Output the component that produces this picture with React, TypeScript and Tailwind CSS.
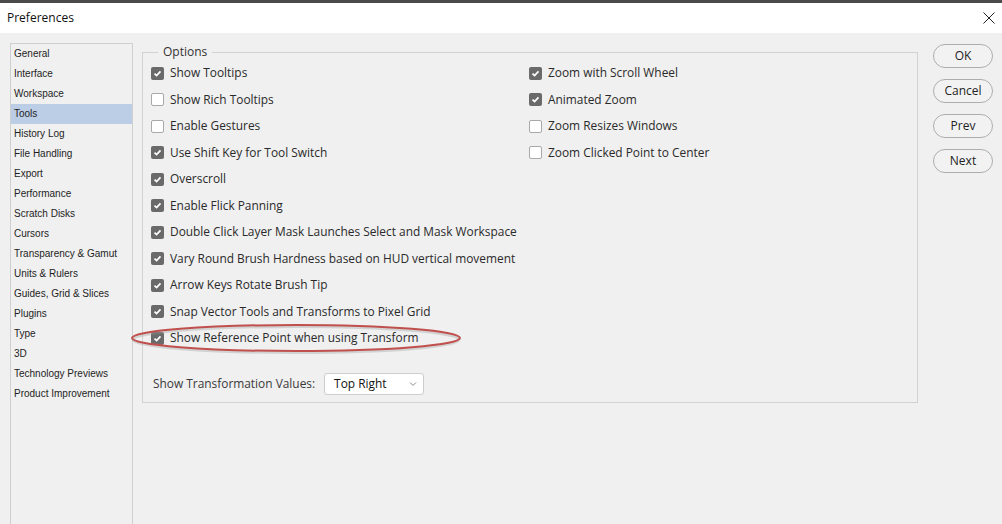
import React from "react";

type Opt = { label: string; checked: boolean };

const left_options: Opt[] = [
  { label: "Show Tooltips", checked: true },
  { label: "Show Rich Tooltips", checked: false },
  { label: "Enable Gestures", checked: false },
  { label: "Use Shift Key for Tool Switch", checked: true },
  { label: "Overscroll", checked: true },
  { label: "Enable Flick Panning", checked: true },
  { label: "Double Click Layer Mask Launches Select and Mask Workspace", checked: true },
  { label: "Vary Round Brush Hardness based on HUD vertical movement", checked: true },
  { label: "Arrow Keys Rotate Brush Tip", checked: true },
  { label: "Snap Vector Tools and Transforms to Pixel Grid", checked: true },
  { label: "Show Reference Point when using Transform", checked: true },
];

const right_options: Opt[] = [
  { label: "Zoom with Scroll Wheel", checked: true },
  { label: "Animated Zoom", checked: true },
  { label: "Zoom Resizes Windows", checked: false },
  { label: "Zoom Clicked Point to Center", checked: false },
];

const sections = [
  "General",
  "Interface",
  "Workspace",
  "Tools",
  "History Log",
  "File Handling",
  "Export",
  "Performance",
  "Scratch Disks",
  "Cursors",
  "Transparency & Gamut",
  "Units & Rulers",
  "Guides, Grid & Slices",
  "Plugins",
  "Type",
  "3D",
  "Technology Previews",
  "Product Improvement",
];

const Checkbox = ({ checked }: { checked: boolean }) =>
  checked ? (
    <span className="flex w-[13px] h-[13px] items-center justify-center rounded-[2px] bg-[#6a6a6a]">
      <svg width="9" height="9" viewBox="0 0 9 9">
        <path d="M1.5 4.6 L3.6 6.6 L7.5 2.4" fill="none" stroke="#fff" strokeWidth="1.7" />
      </svg>
    </span>
  ) : (
    <span className="block w-[13px] h-[13px] rounded-[2px] border border-[#a8a8a8] bg-white" />
  );

const Row = ({ opt }: { opt: Opt }) => (
  <div className="flex h-[26.5px] items-center">
    <Checkbox checked={opt.checked} />
    <span className="ml-[6px] whitespace-nowrap">{opt.label}</span>
  </div>
);

const DialogButton = ({ label }: { label: string }) => (
  <button className="w-[60px] h-[24px] rounded-full border border-[#adadad] bg-[#f2f2f2] text-[12px] text-[#222]">
    {label}
  </button>
);

export default function App() {
  return (
    <div
      className="relative w-[1002px] h-[524px] overflow-hidden bg-[#f0f0f0] flex flex-col text-[#262626]"
      style={{ fontFamily: '"Open Sans", "Liberation Sans", sans-serif' }}
    >
      <div className="h-[3px] bg-[#4b4b4b]" />
      <div className="h-[30px] bg-white flex items-center justify-between pl-[7px] pr-[7px]">
        <span className="text-[12px] text-[#111]">Preferences</span>
        <svg width="12" height="12" viewBox="0 0 12 12">
          <path d="M0.5 0.5 L11.5 11.5 M11.5 0.5 L0.5 11.5" stroke="#222" strokeWidth="1" />
        </svg>
      </div>

      <div className="flex flex-1 pt-[10px]">
        <div
          className="ml-[10px] w-[123px] border-l border-t border-r border-[#cfcfcf] text-[10px] text-[#1e1e1e]"
          style={{ fontFamily: '"Liberation Sans", sans-serif' }}
        >
          {sections.map((s) => (
            <div
              key={s}
              className={
                "h-[20px] flex items-center pl-[3px] pb-[2px] whitespace-nowrap " +
                (s === "Tools" ? "bg-[#bccde6]" : "")
              }
            >
              {s}
            </div>
          ))}
        </div>

        <fieldset className="ml-[9px] w-[776px] h-[360px] border border-[#d2d2d2] pl-[8px] pr-0 pb-0 text-[11.9px] text-[#2a2a2a]">
          <legend className="ml-[7px] px-[5px] text-[12px] text-[#333]">Options</legend>
          <div className="flex -mt-[1px]">
            <div className="w-[378px]">
              {left_options.map((o) => (
                <Row key={o.label} opt={o} />
              ))}
            </div>
            <div>
              {right_options.map((o) => (
                <Row key={o.label} opt={o} />
              ))}
            </div>
          </div>
          <div className="mt-[21px] flex items-center pl-[2px]">
            <span className="whitespace-nowrap text-[#3a3a3a]">Show Transformation Values:</span>
            <div className="ml-[9px] w-[100px] h-[22px] rounded-[3px] border border-[#cdcdcd] bg-white flex items-center justify-between pl-[9px] pr-[6px] text-[#111]">
              <span>Top Right</span>
              <svg width="8" height="6" viewBox="0 0 8 6">
                <path d="M1 1.5 L4 4.5 L7 1.5" fill="none" stroke="#888" strokeWidth="1" />
              </svg>
            </div>
          </div>
        </fieldset>

        <div className="ml-[15px] mt-[1px] flex flex-col gap-[11px]">
          <DialogButton label="OK" />
          <DialogButton label="Cancel" />
          <DialogButton label="Prev" />
          <DialogButton label="Next" />
        </div>
      </div>

      <svg
        className="absolute left-[129px] top-[321px]"
        width="338"
        height="36"
        viewBox="0 0 338 36"
      >
        <ellipse cx="167" cy="18.5" rx="163" ry="13" fill="none" stroke="#9a9a9a" strokeOpacity="0.35" strokeWidth="3" />
        <ellipse cx="167" cy="17" rx="164" ry="13" fill="none" stroke="#c0504d" strokeWidth="2" />
      </svg>
    </div>
  );
}
